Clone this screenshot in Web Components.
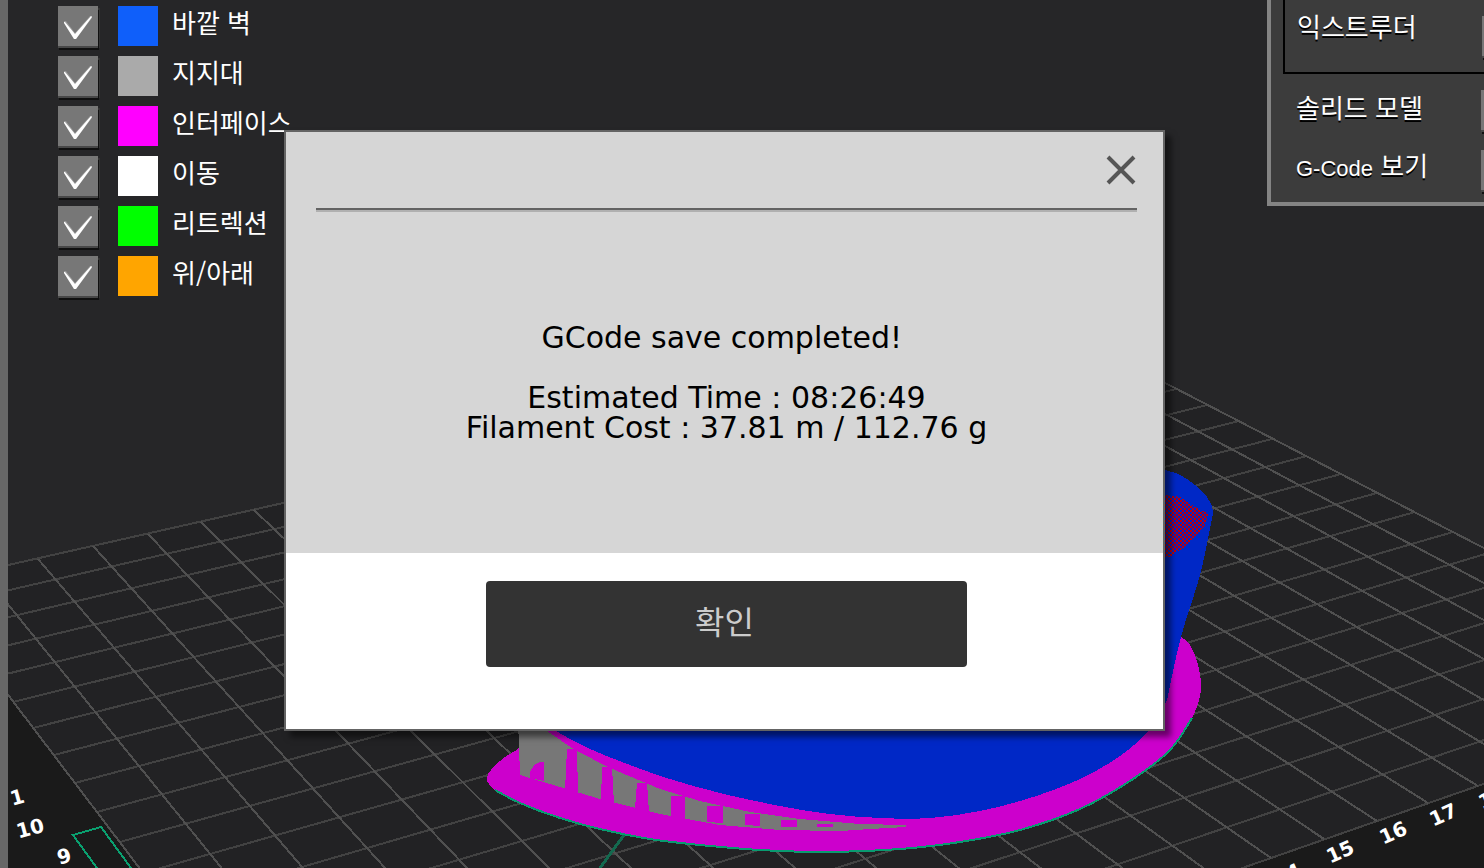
<!DOCTYPE html>
<html lang="ko">
<head>
<meta charset="utf-8">
<title>G-Code 보기</title>
<style>
  html, body { height: 100%; margin: 0; }
  body { background: #262628; overflow: hidden; font-family: "Noto Sans CJK KR", sans-serif; }
</style>
</head>
<body>
<slicer-app></slicer-app>
<script>
const mount = (el, html) => { el.attachShadow({ mode: 'open' }).innerHTML = html; };

/* Square tick box used by the legend and the view panel */
class CheckTile extends HTMLElement {
  constructor() {
    super();
    mount(this, `
<style>
  :host { display: block; }
  label { display: grid; grid-template-columns: 40px; align-items: center; width: 40px; height: 40px; }
  input { grid-area: 1 / 1; appearance: none; margin: 0; width: 40px; height: 40px; background: #777; border-radius: 0;
          box-shadow: 0 2px 0 #484848, 1px 4px 0 #101010, 2px 2px 0 #333; }
  svg { grid-area: 1 / 1; width: 40px; height: 40px; pointer-events: none; position: relative; visibility: hidden; }
  input:checked + svg { visibility: visible; }
</style>
<label><input type="checkbox"><svg viewBox="0 0 40 40" aria-hidden="true"><path d="M6 15 L8 15 L17 27 L32 10 L34 10 L34 12 L18 33 L16 33 L6 17Z" fill="#fff" fill-opacity=".25"/><path d="M6 16 L7 16 L17 28 L33 10 L34 11 L18 33 L16 33 L6 17Z" fill="#fff"/></svg></label>`);
  }
  connectedCallback() {
    const box = this.shadowRoot.querySelector('input');
    box.checked = this.hasAttribute('checked');
    box.setAttribute('aria-label', this.getAttribute('label') || '');
  }
}
customElements.define('check-tile', CheckTile);

class LegendRow extends HTMLElement {
  constructor() {
    super();
    mount(this, `
<style>
  :host { display: flex; align-items: flex-start; gap: 20px; height: 50px; }
  .swatch { width: 40px; height: 40px; background: var(--swatch); }
  .name { margin-left: -6px; color: #fff; font-size: 26px; line-height: 32px; white-space: nowrap; }
</style>
<check-tile checked></check-tile><div class="swatch"></div><div class="name"><slot></slot></div>`);
  }
  connectedCallback() {
    this.style.setProperty('--swatch', this.getAttribute('color'));
    this.shadowRoot.querySelector('check-tile').shadowRoot.querySelector('input')
      .setAttribute('aria-label', this.textContent.trim());
  }
}
customElements.define('legend-row', LegendRow);

class PanelRow extends HTMLElement {
  constructor() {
    super();
    mount(this, `
<style>
  :host { display: grid; grid-template-columns: 185px 40px; align-items: center; height: 60px; }
  .name { color: #fff; font-size: 26px; line-height: 36px; padding-bottom: var(--lift, 6px); white-space: nowrap; text-shadow: 0 2px 0 #000; }
  ::slotted(span) { font-family: "Liberation Sans", sans-serif; font-size: 22px; }
</style>
<div class="name"><slot></slot></div><check-tile></check-tile>`);
  }
  connectedCallback() {
    this.shadowRoot.querySelector('check-tile').shadowRoot.querySelector('input')
      .setAttribute('aria-label', this.textContent.trim());
  }
}
customElements.define('panel-row', PanelRow);

class ViewPanel extends HTMLElement {
  constructor() {
    super();
    mount(this, `
<style>
  :host { display: block; box-sizing: border-box; width: 217px; overflow: hidden; background: #3c3c3c;
          border: solid #848484; border-width: 0 0 4px 4px; padding: 0 0 2px 12px; }
  .group { width: 240px; border: solid #000; border-width: 0 0 2px 2px; margin-bottom: 6px; padding-left: 12px; box-sizing: border-box; --lift: 20px; }
  .group panel-row { height: 72px; }
  .plain { padding-left: 13px; }
</style>
<div class="group"><panel-row>익스트루더</panel-row></div>
<div class="plain">
  <panel-row>솔리드 모델</panel-row>
  <panel-row><span>G-Code</span> 보기</panel-row>
</div>`);
  }
}
customElements.define('view-panel', ViewPanel);

/* Print bed in perspective with the sliced model on it */
const BED = { cols: 24, rows: 19 };
/* column, row, x, y of grid crossings that calibrate the camera */
const CAMERA = [
  [0, 5, 13, 702], [0, 9, 97, 812], [2, 0, 38, 559], [6, 0, 254, 510],
  [24, 5, 1206, 404], [24, 8, 1307, 456], [24, 12, 1453, 533], [18, 12, 1190, 609],
  [18, 19, 1478, 787], [17, 19, 1428, 803], [15, 19, 1324, 838], [18, 16, 1343, 705], [1, 5, 74, 687]
];
function solveCamera(points) {
  const n = 8, m = Array.from({ length: n }, () => new Array(n + 1).fill(0));
  const add = r => { for (let i = 0; i < n; i++) for (let j = 0; j <= n; j++) m[i][j] += r[i] * r[j]; };
  for (const [u, v, x, y] of points) {
    add([u, v, 1, 0, 0, 0, -u * x, -v * x, x]);
    add([0, 0, 0, u, v, 1, -u * y, -v * y, y]);
  }
  for (let c = 0; c < n; c++) {
    let p = c;
    for (let r = c; r < n; r++) if (Math.abs(m[r][c]) > Math.abs(m[p][c])) p = r;
    [m[c], m[p]] = [m[p], m[c]];
    for (let r = 0; r < n; r++) if (r !== c) {
      const f = m[r][c] / m[c][c];
      for (let k = c; k <= n; k++) m[r][k] -= f * m[c][k];
    }
  }
  const h = m.map((r, i) => r[n] / r[i]);
  return (u, v) => {
    const w = h[6] * u + h[7] * v + 1;
    return `${Math.round((h[0] * u + h[1] * v + h[2]) / w)} ${Math.round((h[3] * u + h[4] * v + h[5]) / w)}`;
  };
}
/* Smooth curve through a list of points (Catmull-Rom as cubic Béziers) */
function smooth(list) {
  const p = list.trim().split(/\s+/).map(s => s.split(',').map(Number));
  let d = `M${p[0]}`;
  for (let i = 0; i < p.length - 1; i++) {
    const a = p[Math.max(i - 1, 0)], b = p[i], c = p[i + 1], e = p[Math.min(i + 2, p.length - 1)];
    const t = (q, k, s) => Math.round((q[k] + s) * 10) / 10;
    d += ` C${t(b, 0, (c[0] - a[0]) / 6)},${t(b, 1, (c[1] - a[1]) / 6)} ${t(c, 0, (b[0] - e[0]) / 6)},${t(c, 1, (b[1] - e[1]) / 6)} ${c}`;
  }
  return d;
}
const BRIM = '518,749 500,761 487,777 495,790 520,803 560,818 600,829 650,839 700,845 760,850 830,852 900,849 960,842 1020,830 1080,809 1130,781 1170,750 1192,718 1201,690 1198,665 1190,645 1181,637';
const BRIM_EDGE = '495,790 520,803 560,818 600,829 650,839 700,845 760,850 830,852 900,849 960,842 1020,830 1080,809 1130,781 1170,750 1192,718';
const WALL_TOP = '1100,450 1140,460 1166,470 1180,475 1195,485 1207,497 1213,510 1211,523 1200,575 1181,637 1167,700';
const WALL_BOTTOM = '1167,700 1148,731 1120,756 1080,779 1030,798 980,811 930,818 880,818 830,814 780,806 720,793 670,779 630,765 590,749 556,731 530,712';

class BedScene extends HTMLElement {
  constructor() {
    super();
    const at = solveCamera(CAMERA);
    const quad = (u0, v0, u1, v1) => `M${at(u0, v0)} L${at(u1, v0)} L${at(u1, v1)} L${at(u0, v1)}Z`;
    let across = '', along = '';
    for (let v = 0; v <= BED.rows; v++) across += `M${at(0, v)} L${at(BED.cols, v)}`;
    for (let u = 0; u <= BED.cols; u++) along += `M${at(u, 0)} L${at(u, BED.rows)}`;
    mount(this, `
<style>
  :host { display: block; overflow: hidden; }
  svg { display: block; width: 100%; height: 100%; }
  text { font: 700 20px "DejaVu Sans", sans-serif; fill: #fff; text-anchor: middle; }
</style>
<svg viewBox="8 0 1476 868" preserveAspectRatio="xMidYMid slice" aria-hidden="true">
  <defs>
    <pattern id="stipple" width="4" height="4" patternUnits="userSpaceOnUse">
      <rect width="2" height="2" fill="#c00008"/><rect x="2" y="2" width="2" height="2" fill="#c00008"/>
    </pattern>
  </defs>
  <g shape-rendering="crispEdges">
    <path d="${quad(-2, 0, 24, 22)}" fill="#1a1a1a"/>
    <path d="${quad(0, 0, 24, 19)}" fill="#222224"/>
    <path d="${across}" stroke="#424242" stroke-width="2" fill="none"/>
    <path d="${along}" stroke="#505050" stroke-width="2" fill="none"/>
    <path d="M97 868 L73 835 L101 827 L131 868" stroke="#0aa070" stroke-width="2" fill="none"/>
    <path d="M624 835 L600 868" stroke="#14694f" stroke-width="3" fill="none"/>
    <path d="${smooth(BRIM)} L1100 600 L560 700Z" fill="#c0c"/>
    <path d="${smooth(BRIM_EDGE)}" stroke="#0a9a70" stroke-width="2" fill="none"/>
    <path d="M518 720 L530 720 L547 731 L575 750 L610 768 L660 789 L700 801 L750 812 L800 819 L860 824 L906 825 L906 827 L870 829 L840 831 L780 830 L720 825 L660 814 L600 799 L560 787 L520 775Z" fill="#777"/>
    <path d="M530 778 V772 L534 765 L540 762 H544 V781Z M565 791 L567 749 H577 L578 793Z M601 801 L602 767 L612 767 L614 804Z M635 809 L637 783 H647 L649 812Z M671 817 V796 H685 V819Z M707 822 V806 H723 V823Z M745 825 V814 H760 V826Z M781 827 V820 H797 V827Z M817 827 V824 H833 V827Z" fill="#c0c"/>
    <path d="${smooth(WALL_TOP)} L600 500Z" fill="#0028c6"/>
    <path d="${smooth(WALL_BOTTOM)} L600 500 L1100 450Z" fill="#0028c6"/>
    <path d="M1160 494 L1180 497 L1195 507 L1209 514 L1205 525 L1190 543 L1170 557 L1160 558Z" fill="url(#stipple)"/>
  </g>
  <text transform="translate(19 804) rotate(-15)">1</text>
  <text transform="translate(32 835) rotate(-15)">10</text>
  <text transform="translate(66 863) rotate(-15)">9</text>
  <text transform="translate(1290 881) rotate(-24)">14</text>
  <text transform="translate(1343 858) rotate(-24)">15</text>
  <text transform="translate(1396 839) rotate(-24)">16</text>
  <text transform="translate(1446 821) rotate(-24)">17</text>
  <text transform="translate(1495 804) rotate(-24)">18</text>
</svg>`);
  }
}
customElements.define('bed-scene', BedScene);

class SaveDialog extends HTMLElement {
  constructor() {
    super();
    mount(this, `
<style>
  :host { display: block; box-sizing: border-box; width: 881px; max-width: 100%; border: 2px solid #646464; background: #fff;
          box-shadow: 6px 6px 6px rgba(0, 0, 0, .5); }
  .body { background: #d6d6d6; padding: 20px 26px 0 30px; min-height: 421px; box-sizing: border-box; }
  header { display: flex; justify-content: flex-end; padding-bottom: 20px; border-bottom: 2px solid #636363; box-shadow: 0 2px 0 #b0b0b0; }
  .close { width: 32px; height: 36px; padding: 0; border: 0; background: none; display: grid; place-items: center; }
  .close svg { width: 32px; height: 32px; }
  .message { margin: 0; padding-top: 113px; text-align: center; white-space: pre; color: #000;
             font: 30px/30px "DejaVu Sans", sans-serif; }
  footer { display: flex; justify-content: center; padding: 28px 0 62px 4px; }
  .ok { width: 481px; height: 86px; padding: 0 4px 8px 0; border: 0; border-radius: 4px; background: #333; color: #ccc;
        font: 32px/40px "Noto Sans CJK KR", sans-serif; }
</style>
<div class="body">
  <header><button class="close" type="button" aria-label="닫기"><svg viewBox="0 0 32 32" aria-hidden="true"><path d="M3 3 L29 29 M29 3 L3 29" stroke="#555" stroke-width="4" fill="none"/></svg></button></header>
  <p class="message"><slot></slot></p>
</div>
<footer><button class="ok" type="button">확인</button></footer>`);
  }
}
customElements.define('save-dialog', SaveDialog);

class SlicerApp extends HTMLElement {
  constructor() {
    super();
    mount(this, `
<style>
  :host { display: block; box-sizing: border-box; height: 100%; min-height: 100vh; border-left: 8px solid #676767; position: relative; overflow: hidden; background: #262628; }
  bed-scene { position: absolute; inset: 0; }
  .tools { position: relative; display: flex; justify-content: space-between; align-items: flex-start; }
  .legend { padding: 6px 0 0 50px; }
  .overlay { position: absolute; inset: 0; display: flex; justify-content: center; align-items: flex-start; padding: 130px 43px 0 0; }
</style>
<bed-scene></bed-scene>
<div class="tools">
  <div class="legend">
    <legend-row color="#0f5ffa">바깥 벽</legend-row>
    <legend-row color="#aaaaaa">지지대</legend-row>
    <legend-row color="#ff00ff">인터페이스</legend-row>
    <legend-row color="#ffffff">이동</legend-row>
    <legend-row color="#00ff00">리트렉션</legend-row>
    <legend-row color="#ffa500">위/아래</legend-row>
  </div>
  <view-panel></view-panel>
</div>
<div class="overlay"><save-dialog role="dialog">GCode save completed! 

Estimated Time : 08:26:49
Filament Cost : 37.81 m / 112.76 g</save-dialog></div>`);
  }
}
customElements.define('slicer-app', SlicerApp);
</script>
</body>
</html>
